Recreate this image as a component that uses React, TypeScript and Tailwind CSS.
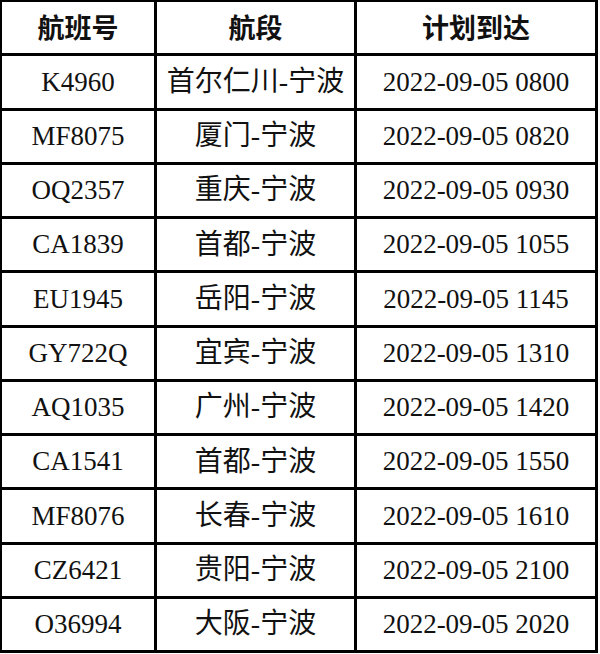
import React from "react";

const rows: [string, string, string][] = [
  ["K4960", "首尔仁川-宁波", "2022-09-05 0800"],
  ["MF8075", "厦门-宁波", "2022-09-05 0820"],
  ["OQ2357", "重庆-宁波", "2022-09-05 0930"],
  ["CA1839", "首都-宁波", "2022-09-05 1055"],
  ["EU1945", "岳阳-宁波", "2022-09-05 1145"],
  ["GY722Q", "宜宾-宁波", "2022-09-05 1310"],
  ["AQ1035", "广州-宁波", "2022-09-05 1420"],
  ["CA1541", "首都-宁波", "2022-09-05 1550"],
  ["MF8076", "长春-宁波", "2022-09-05 1610"],
  ["CZ6421", "贵阳-宁波", "2022-09-05 2100"],
  ["O36994", "大阪-宁波", "2022-09-05 2020"],
];

const cell =
  "flex items-center justify-center border-r-[3px] border-b-[3px] border-black whitespace-nowrap";

export default function App() {
  return (
    <div
      className="w-[600px] h-[654px] bg-white text-[#111]"
      style={{ fontFamily: "'Liberation Serif', 'Noto Sans CJK SC', serif" }}
    >
      <div className="grid w-[598px] h-[653px] grid-cols-[155px_200px_241px] grid-rows-[repeat(12,1fr)] border-l-2 border-t-2 border-black">
        <div className={`${cell} pt-1 text-[27px] font-bold`}>航班号</div>
        <div className={`${cell} pt-1 text-[27px] font-bold`}>航段</div>
        <div className={`${cell} pt-1 text-[27px] font-bold`}>计划到达</div>
        {rows.map(([no, route, time]) => (
          <React.Fragment key={no + time}>
            <div className={`${cell} text-[27px]`}>{no}</div>
            <div className={`${cell} text-[28px]`}>{route}</div>
            <div className={`${cell} text-[27px]`}>{time}</div>
          </React.Fragment>
        ))}
      </div>
    </div>
  );
}
